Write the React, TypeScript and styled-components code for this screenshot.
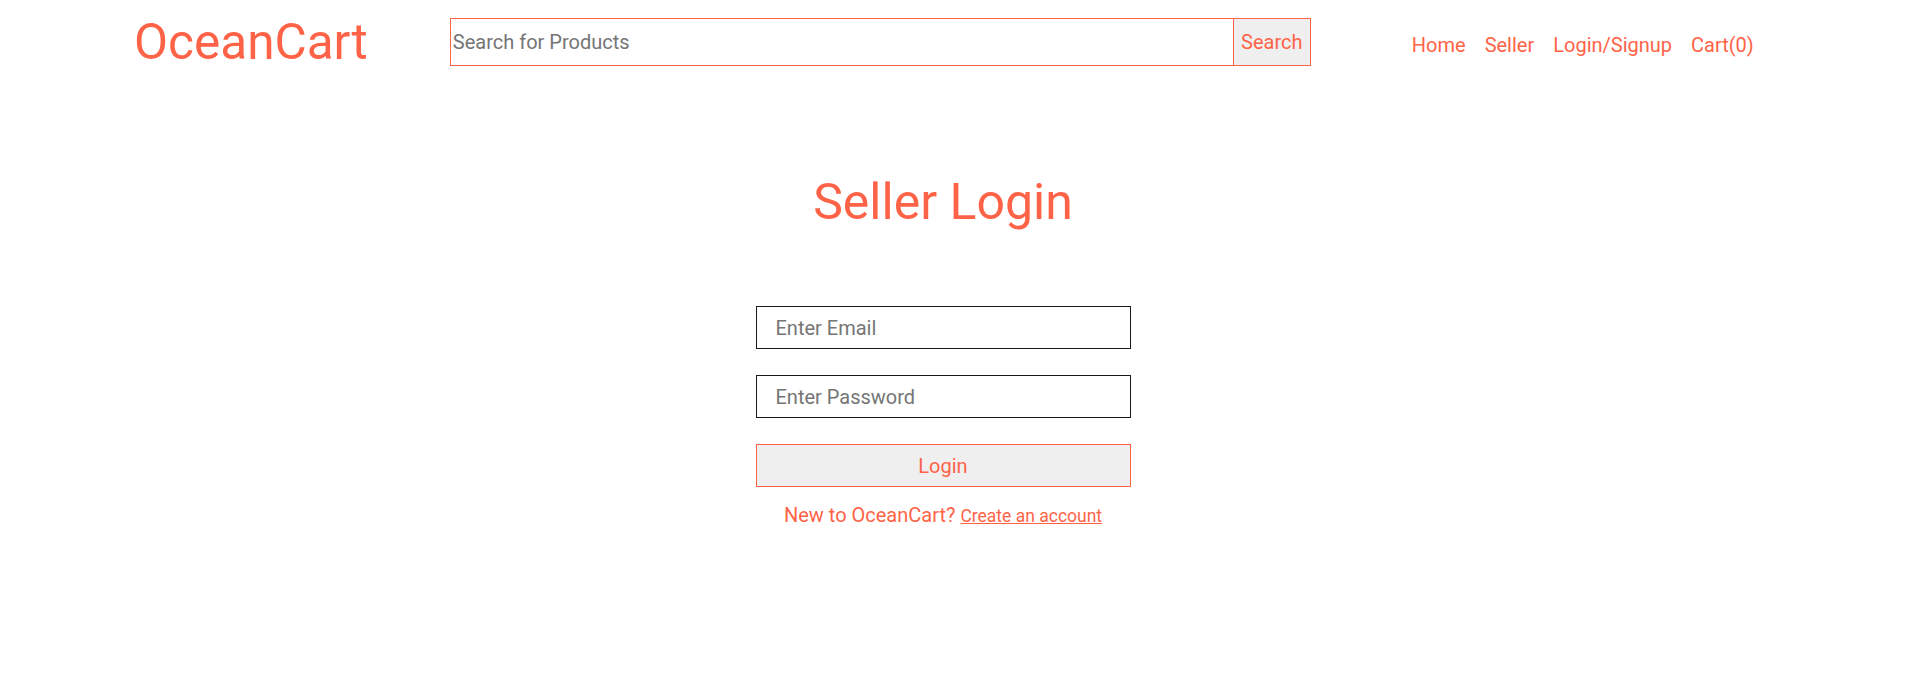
import styled, { createGlobalStyle } from "styled-components";

const accent = "#ff6347";

const GlobalStyle = createGlobalStyle`
  body {
    margin: 0;
    background: #ffffff;
    font-family: Roboto, "Liberation Sans", sans-serif;
  }
  * {
    box-sizing: border-box;
  }
`;

const Header = styled.header`
  display: flex;
  align-items: center;
  height: 84px;
  padding-left: 134px;
`;

const Logo = styled.h1`
  margin: 0 82px 0 0;
  font-size: 49.5px;
  font-weight: 400;
  line-height: 58px;
  color: ${accent};
`;

const SearchBar = styled.form`
  display: flex;
  width: 861px;
  height: 48px;
  border: 1px solid ${accent};
`;

const SearchInput = styled.input`
  flex: 1;
  border: none;
  border-right: 1px solid ${accent};
  padding: 1px 2px;
  font-family: inherit;
  font-size: 20px;
  outline: none;
  &::placeholder {
    color: #757575;
  }
`;

const SearchButton = styled.button`
  width: 76px;
  border: none;
  background: #efefef;
  color: ${accent};
  font-family: inherit;
  font-size: 20px;
  padding: 0;
`;

const Nav = styled.nav`
  display: flex;
  gap: 19px;
  margin: 6px 0 0 101px;
`;

const NavLink = styled.a`
  color: ${accent};
  font-size: 20px;
  text-decoration: none;
  cursor: pointer;
`;

const Main = styled.main`
  display: flex;
  flex-direction: column;
  align-items: center;
  padding: 89px 31px 0 0;
`;

const Title = styled.h2`
  margin: 0 0 75px;
  font-size: 50px;
  font-weight: 400;
  line-height: 58px;
  color: ${accent};
`;

const Form = styled.form`
  display: flex;
  flex-direction: column;
  align-items: center;
  gap: 26px;
  width: 375px;
`;

const Field = styled.input`
  width: 100%;
  height: 43px;
  padding: 0 19px;
  border: 1px solid #1a1a1a;
  font-family: inherit;
  font-size: 20px;
  outline: none;
  &::placeholder {
    color: #757575;
  }
`;

const LoginButton = styled.button`
  width: 100%;
  height: 43px;
  border: 1px solid ${accent};
  background: #efefef;
  color: ${accent};
  font-family: inherit;
  font-size: 20px;
  cursor: pointer;
`;

const SignupNote = styled.p`
  margin: 16px 0 0;
  font-size: 20px;
  line-height: 24px;
  color: ${accent};

  span {
    font-size: 17.5px;
    text-decoration: underline;
    cursor: pointer;
  }
`;

export default function App() {
  return (
    <>
      <GlobalStyle />
      <Header>
        <Logo>OceanCart</Logo>
        <SearchBar onSubmit={(e) => e.preventDefault()}>
          <SearchInput type="text" placeholder="Search for Products" />
          <SearchButton type="submit">Search</SearchButton>
        </SearchBar>
        <Nav>
          <NavLink>Home</NavLink>
          <NavLink>Seller</NavLink>
          <NavLink>Login/Signup</NavLink>
          <NavLink>Cart(0)</NavLink>
        </Nav>
      </Header>
      <Main>
        <Title>Seller Login</Title>
        <Form onSubmit={(e) => e.preventDefault()}>
          <Field type="email" placeholder="Enter Email" />
          <Field type="password" placeholder="Enter Password" />
          <LoginButton type="submit">Login</LoginButton>
        </Form>
        <SignupNote>
          New to OceanCart? <span>Create an account</span>
        </SignupNote>
      </Main>
    </>
  );
}
